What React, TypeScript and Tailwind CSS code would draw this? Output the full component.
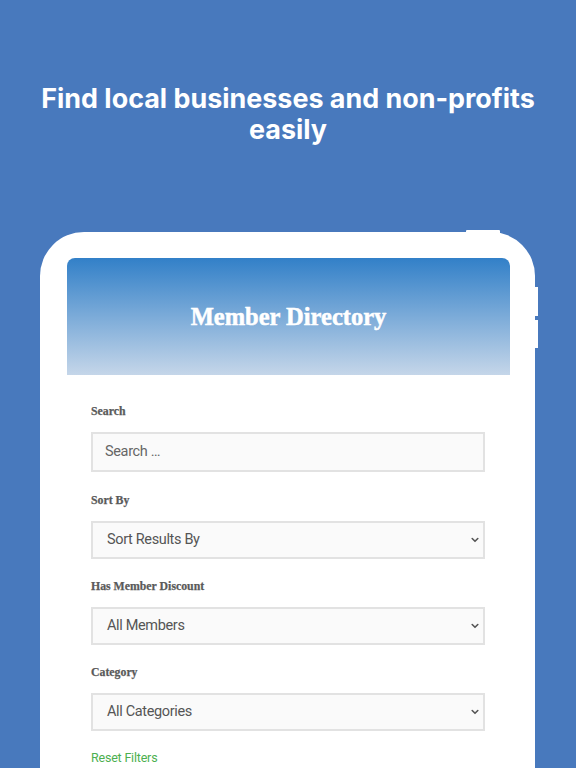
import React from "react";

function Chevron() {
  return (
    <svg width="8" height="6" viewBox="0 0 8 6" className="shrink-0">
      <path d="M1.2 1.5 L4 4.3 L6.8 1.5" fill="none" stroke="#555" strokeWidth="1.6" strokeLinecap="round" strokeLinejoin="round" />
    </svg>
  );
}

const slab = '"Liberation Serif", "DejaVu Serif", serif';
const sans = 'Roboto, "Liberation Sans", sans-serif';

function Label({ children }: { children: React.ReactNode }) {
  return (
    <div className="text-[11.8px] leading-[16px] font-bold text-[#5a5a5a] [-webkit-text-stroke:0.25px_#5a5a5a]" style={{ fontFamily: slab }}>
      {children}
    </div>
  );
}

function Select({ text }: { text: string }) {
  return (
    <div className="mt-[13px] h-[38px] border-2 border-[#e2e2e2] bg-[#fafafa] flex items-center justify-between pl-[14px] pr-[4px] text-[14.5px] tracking-[-0.35px] text-[#555]" style={{ fontFamily: sans }}>
      <span>{text}</span>
      <Chevron />
    </div>
  );
}

export default function App() {
  return (
    <div className="w-[576px] h-[768px] overflow-hidden bg-[#4879bd]" style={{ fontFamily: 'Inter, "Liberation Sans", sans-serif' }}>
      <h1 className="pt-[83px] text-center text-white font-bold text-[26.9px] leading-[31px] px-[30px]">
        Find local businesses and non-profits easily
      </h1>
      <div className="relative ml-[40px] mt-[87px] w-[495px] h-[600px]">
        <div className="absolute right-[-3px] top-[55px] w-[4px] h-[29px] bg-white" />
        <div className="absolute right-[-3px] top-[88px] w-[4px] h-[28px] bg-white" />
        <div className="absolute left-[426px] top-[-2px] w-[34px] h-[4px] bg-white rounded-t-[1px]" />
        <div className="relative h-full bg-white rounded-t-[44px] pt-[26px] pl-[27px] pr-[25px]">
          <div className="rounded-t-[8px] overflow-hidden bg-white">
            <div className="h-[117px] flex items-center justify-center bg-[linear-gradient(to_bottom,#3280c8,#c5d6e9)]">
              <div className="text-white font-bold text-[24.5px] mt-[1px] [-webkit-text-stroke:0.5px_white]" style={{ fontFamily: slab }}>
                Member Directory
              </div>
            </div>
            <div className="pt-[28px] pl-[24px] pr-[25px]">
              <Label>Search</Label>
              <div className="mt-[13px] h-[40px] border-2 border-[#e2e2e2] bg-[#fafafa] flex items-center pl-[12px] text-[14.5px] tracking-[-0.35px] text-[#666]" style={{ fontFamily: sans }}>
                Search …
              </div>
              <div className="mt-[20px]">
                <Label>Sort By</Label>
                <Select text="Sort Results By" />
              </div>
              <div className="mt-[19px]">
                <Label>Has Member Discount</Label>
                <Select text="All Members" />
              </div>
              <div className="mt-[19px]">
                <Label>Category</Label>
                <Select text="All Categories" />
              </div>
              <div className="mt-[19px] text-[12.5px] tracking-[-0.2px] leading-[16px] text-[#4caf50]" style={{ fontFamily: sans }}>
                Reset Filters
              </div>
            </div>
          </div>
        </div>
      </div>
    </div>
  );
}
